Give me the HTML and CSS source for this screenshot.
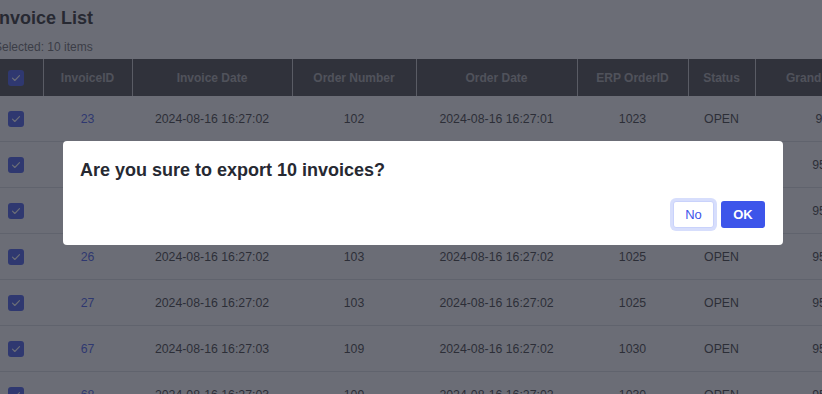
FILE: index.html
```html
<!DOCTYPE html>
<html lang="en">
<head>
    <meta charset="UTF-8">
    <meta name="viewport" content="width=device-width, initial-scale=1.0">
    <title>Invoice List</title>
    <link rel="stylesheet" href="styles.css">
</head>
<body>

    <div class="page">
        <h2 class="page-title">Invoice List</h2>
        <p class="selected-info">Selected: 10 items</p>

        <table class="invoice-table">
            <colgroup>
                <col class="col-check">
                <col class="col-id">
                <col class="col-date">
                <col class="col-order">
                <col class="col-date2">
                <col class="col-erp">
                <col class="col-status">
                <col class="col-total">
            </colgroup>
            <thead>
                <tr>
                    <th class="check-cell"><span class="checkbox"><svg viewBox="0 0 16 16"><path d="M4.5 8.2l2.3 2.3 4.7-4.9"/></svg></span></th>
                    <th>InvoiceID</th>
                    <th>Invoice Date</th>
                    <th>Order Number</th>
                    <th>Order Date</th>
                    <th>ERP OrderID</th>
                    <th>Status</th>
                    <th>Grand Total</th>
                </tr>
            </thead>
            <tbody id="rows"></tbody>
        </table>
    </div>

    <!-- Export confirm dialog -->
    <div class="overlay">
        <div class="dialog">
            <div class="dialog-title">Are you sure to export 10 invoices?</div>
            <div class="dialog-actions">
                <button class="btn btn-no">No</button>
                <button class="btn btn-ok">OK</button>
            </div>
        </div>
    </div>

    <script>
        const invoices = [
            { id: 23, date: "2024-08-16 16:27:02", order: 102, orderDate: "2024-08-16 16:27:01", erp: 1023, status: "OPEN", total: "9" },
            { id: 24, date: "2024-08-16 16:27:02", order: 102, orderDate: "2024-08-16 16:27:01", erp: 1024, status: "OPEN", total: "95" },
            { id: 25, date: "2024-08-16 16:27:02", order: 103, orderDate: "2024-08-16 16:27:02", erp: 1024, status: "OPEN", total: "95" },
            { id: 26, date: "2024-08-16 16:27:02", order: 103, orderDate: "2024-08-16 16:27:02", erp: 1025, status: "OPEN", total: "95" },
            { id: 27, date: "2024-08-16 16:27:02", order: 103, orderDate: "2024-08-16 16:27:02", erp: 1025, status: "OPEN", total: "95" },
            { id: 67, date: "2024-08-16 16:27:03", order: 109, orderDate: "2024-08-16 16:27:02", erp: 1030, status: "OPEN", total: "95" },
            { id: 68, date: "2024-08-16 16:27:03", order: 109, orderDate: "2024-08-16 16:27:02", erp: 1030, status: "OPEN", total: "95" }
        ];

        const rows = document.getElementById("rows");
        const check = '<span class="checkbox"><svg viewBox="0 0 16 16"><path d="M4.5 8.2l2.3 2.3 4.7-4.9"/></svg></span>';

        invoices.forEach(inv => {
            rows.innerHTML += `<tr>
                <td class="check-cell">${check}</td>
                <td><a href="#" class="invoice-link">${inv.id}</a></td>
                <td>${inv.date}</td>
                <td>${inv.order}</td>
                <td>${inv.orderDate}</td>
                <td>${inv.erp}</td>
                <td>${inv.status}</td>
                <td>${inv.total}</td>
            </tr>`;
        });
    </script>

</body>
</html>
```

FILE: styles.css
```css
html, body {
    margin: 0;
    overflow: hidden;
}
body {
    font-family: "Liberation Sans", Arial, sans-serif;
    background-color: #ffffff;
    color: #333;
}
.page {
    margin-left: -6px;
    width: 900px;
}
.page-title {
    margin: 0;
    padding-top: 7px;
    font-size: 18px;
    line-height: 22px;
    font-weight: bold;
    color: #262626;
}
.selected-info {
    margin: 11px 0 0;
    font-size: 12px;
    line-height: 14px;
    color: #666;
}

/* Table */
.invoice-table {
    margin-top: 5px;
    border-collapse: collapse;
    table-layout: fixed;
    width: 889px;
    font-size: 12.3px;
}
.col-check { width: 49px; }
.col-id { width: 89px; }
.col-date { width: 160px; }
.col-order { width: 124px; }
.col-date2 { width: 161px; }
.col-erp { width: 111px; }
.col-status { width: 67px; }
.col-total { width: 128px; }

.invoice-table th {
    height: 37px;
    padding: 0;
    background: #434343;
    color: #a8a8a8;
    font-size: 12px;
    font-weight: bold;
    text-align: center;
    border-left: 1px solid #c8c8c8;
}
.invoice-table th:first-child {
    border-left: none;
}
.invoice-table td {
    height: 45px;
    padding: 0;
    text-align: center;
    color: #363636;
    border-bottom: 1px solid #dcdde2;
}
.invoice-table .check-cell {
    text-align: left;
    padding-left: 14px;
}
.invoice-link {
    color: #3d55ea;
    text-decoration: none;
}
.checkbox {
    display: inline-flex;
    width: 16px;
    height: 16px;
    border-radius: 3px;
    background: #3d55ea;
    vertical-align: middle;
}
.checkbox svg {
    width: 16px;
    height: 16px;
    fill: none;
    stroke: #ffffff;
    stroke-width: 1.1;
    stroke-linecap: round;
    stroke-linejoin: round;
}

/* Confirm dialog */
.overlay {
    position: fixed;
    inset: 0;
    background: rgba(40, 44, 56, 0.69);
    padding: 141px 0 0 63px;
}
.dialog {
    width: 720px;
    height: 104px;
    box-sizing: border-box;
    background: #ffffff;
    border-radius: 4px;
    padding: 19px 18px 17px 17px;
    display: flex;
    flex-direction: column;
    justify-content: space-between;
}
.dialog-title {
    font-size: 18px;
    line-height: 21px;
    font-weight: bold;
    color: #262932;
}
.dialog-actions {
    display: flex;
    justify-content: flex-end;
    gap: 7px;
}
.btn {
    font-family: "Liberation Sans", Arial, sans-serif;
    font-size: 13px;
    height: 27px;
    border-radius: 3px;
    cursor: pointer;
}
.btn-no {
    width: 41px;
    background: #ffffff;
    color: #3d55ea;
    border: 1px solid #c9d2fb;
    box-shadow: 0 0 0 3px #d7defc;
}
.btn-ok {
    width: 44px;
    background: #3d55ea;
    color: #ffffff;
    font-weight: bold;
    border: none;
}
```
